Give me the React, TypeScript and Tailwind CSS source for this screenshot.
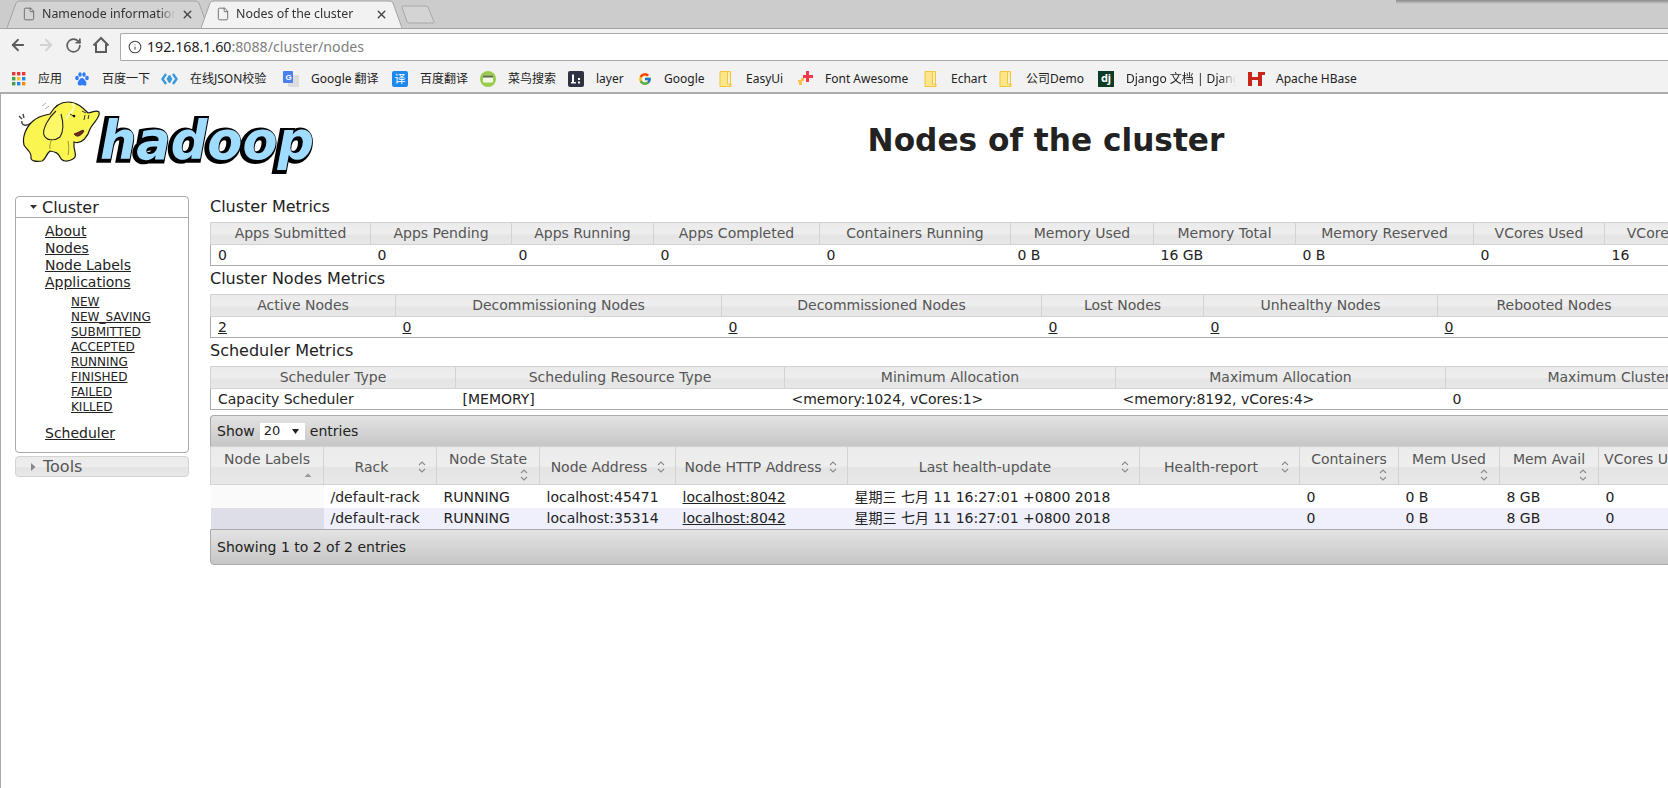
import React from 'react'
import { ArrowLeft, ArrowRight, RotateCw, Info, File, X } from 'lucide-react'
import { FcGoogle } from 'react-icons/fc'

interface Col {
  label: string
  width: string
}

const clusterCols: Col[] = [
  { label: 'Apps Submitted', width: 'w-[160px]' },
  { label: 'Apps Pending', width: 'w-[141px]' },
  { label: 'Apps Running', width: 'w-[142px]' },
  { label: 'Apps Completed', width: 'w-[166px]' },
  { label: 'Containers Running', width: 'w-[191px]' },
  { label: 'Memory Used', width: 'w-[143px]' },
  { label: 'Memory Total', width: 'w-[142px]' },
  { label: 'Memory Reserved', width: 'w-[178px]' },
  { label: 'VCores Used', width: 'w-[131px]' },
  { label: 'VCores Total', width: 'w-[131px]' },
]
const clusterValues = ['0', '0', '0', '0', '0', '0 B', '16 GB', '0 B', '0', '16']

const nodeCols: Col[] = [
  { label: 'Active Nodes', width: 'w-[185px]' },
  { label: 'Decommissioning Nodes', width: 'w-[326px]' },
  { label: 'Decommissioned Nodes', width: 'w-[320px]' },
  { label: 'Lost Nodes', width: 'w-[162px]' },
  { label: 'Unhealthy Nodes', width: 'w-[234px]' },
  { label: 'Rebooted Nodes', width: 'w-[233px]' },
]

const schedulerCols: Col[] = [
  { label: 'Scheduler Type', width: 'w-[245px]' },
  { label: 'Scheduling Resource Type', width: 'w-[329px]' },
  { label: 'Minimum Allocation', width: 'w-[331px]' },
  { label: 'Maximum Allocation', width: 'w-[330px]' },
  { label: 'Maximum Cluster Application Priority', width: 'w-[464px]' },
]
const schedulerValues = ['Capacity Scheduler', '[MEMORY]', '<memory:1024, vCores:1>', '<memory:8192, vCores:4>', '0']

interface NodeCol extends Col {
  stacked?: boolean
  up?: boolean
}

const listCols: NodeCol[] = [
  { label: 'Node Labels', width: 'w-[113px]', stacked: true, up: true },
  { label: 'Rack', width: 'w-[113px]' },
  { label: 'Node State', width: 'w-[103px]', stacked: true },
  { label: 'Node Address', width: 'w-[136px]' },
  { label: 'Node HTTP Address', width: 'w-[172px]' },
  { label: 'Last health-update', width: 'w-[292px]' },
  { label: 'Health-report', width: 'w-[160px]' },
  { label: 'Containers', width: 'w-[99px]', stacked: true },
  { label: 'Mem Used', width: 'w-[101px]', stacked: true },
  { label: 'Mem Avail', width: 'w-[99px]', stacked: true },
  { label: 'VCores Used', width: 'w-[100px]', stacked: true },
]

const listRows = [
  ['', '/default-rack', 'RUNNING', 'localhost:45471', 'localhost:8042', '星期三 七月 11 16:27:01 +0800 2018', '', '0', '0 B', '8 GB', '0'],
  ['', '/default-rack', 'RUNNING', 'localhost:35314', 'localhost:8042', '星期三 七月 11 16:27:01 +0800 2018', '', '0', '0 B', '8 GB', '0'],
]

const subLinks = ['NEW', 'NEW_SAVING', 'SUBMITTED', 'ACCEPTED', 'RUNNING', 'FINISHED', 'FAILED', 'KILLED']

const thClass =
  'border border-[#d3d3d3] bg-[linear-gradient(#ebebeb_0%,#eeeeee_50%,#e4e4e4_55%,#e8e8e8_100%)] font-normal text-[#555555] text-center p-0 h-[21px] overflow-hidden whitespace-nowrap'

const SortIcon = ({ up }: { up?: boolean }) => (
  <svg width="10" height="14" viewBox="0 0 10 14" className="shrink-0">
    {up ? (
      <path d="M1.5 9 L5 5.5 L8.5 9 Z" fill="#999999" />
    ) : (
      <path d="M2 5 L5 2 L8 5 M2 9 L5 12 L8 9" fill="none" stroke="#8a8a8a" strokeWidth="1.1" />
    )}
  </svg>
)

const MetricTable = ({ title, cols, values, width, linked }: { title: string; cols: Col[]; values: string[]; width: string; linked?: boolean }) => (
  <div>
    <h3 className="h-[28px] pt-[3px] text-[16px] leading-[20px] text-[#222222]">{title}</h3>
    <table className={`table-fixed border-collapse border-b border-l border-[#aaaaaa] text-[14px] ${width}`}>
      <thead>
        <tr>
          {cols.map(c => (
            <th key={c.label} className={`${thClass} ${c.width}`}>{c.label}</th>
          ))}
        </tr>
      </thead>
      <tbody>
        <tr>
          {values.map((v, i) => (
            <td key={i} className="h-[21px] p-0 pl-[7px] leading-[20px] text-[#222222] whitespace-nowrap">
              {linked ? <a className="underline">{v}</a> : v}
            </td>
          ))}
        </tr>
      </tbody>
    </table>
  </div>
)

const Tab = ({ title, active }: { title: string; active?: boolean }) => (
  <div className={`relative w-[201px] h-[28px] shrink-0 -mr-[7px] ${active ? 'z-10' : ''}`}>
    <svg width="201" height="28" viewBox="0 0 201 28" className="absolute left-0 top-0">
      <path
        d="M0 28 L9 3 Q10 1 13 1 L188 1 Q191 1 192 3 L201 28"
        fill={active ? '#f2f2f2' : '#d3d3d3'}
        stroke="#a3a3a3"
      />
    </svg>
    <div className="relative flex items-center h-full pl-[15px] pr-[14px] gap-[6px]">
      <File size={14} strokeWidth={1.4} className="text-[#5a5a5a] shrink-0" />
      <span className="flex-1 overflow-hidden whitespace-nowrap text-[12.4px] text-[#333333] [mask-image:linear-gradient(to_right,black_88%,transparent)]">
        {title}
      </span>
      <X size={13} strokeWidth={2.6} className="text-[#444444] shrink-0" />
    </div>
  </div>
)

const Folder = () => (
  <svg width="13" height="16" viewBox="0 0 13 16">
    <path d="M1 .5H8.5V13H12V15.5H1Z" fill="#fde68a" stroke="#f0c63c" />
    <path d="M8.5 .5H11.5V15.5" fill="#fdeaa5" stroke="#f0c63c" />
  </svg>
)

const bookmarks: { icon: React.ReactNode; label: string; text: string }[] = [
  {
    icon: (
      <svg width="14" height="14" viewBox="0 0 14 14">
        <rect x="0" y="0" width="3.4" height="3.4" fill="#e53935" />
        <rect x="5" y="0" width="3.4" height="3.4" fill="#e53935" />
        <rect x="10" y="0" width="3.4" height="3.4" fill="#e53935" />
        <rect x="0" y="5" width="3.4" height="3.4" fill="#43a047" />
        <rect x="5" y="5" width="3.4" height="3.4" fill="#fbc02d" />
        <rect x="10" y="5" width="3.4" height="3.4" fill="#1e88e5" />
        <rect x="0" y="10" width="3.4" height="3.4" fill="#43a047" />
        <rect x="5" y="10" width="3.4" height="3.4" fill="#1e88e5" />
        <rect x="10" y="10" width="3.4" height="3.4" fill="#fb8c00" />
      </svg>
    ),
    label: '应用',
    text: 'ml-[12px] mr-[12px] w-[24px]',
  },
  {
    icon: (
      <svg width="16" height="16" viewBox="0 0 16 16">
        <g fill="#2f7cf6">
          <ellipse cx="3" cy="7" rx="1.8" ry="2.2" />
          <ellipse cx="6" cy="3.5" rx="1.7" ry="2.2" />
          <ellipse cx="10" cy="3.5" rx="1.7" ry="2.2" />
          <ellipse cx="13" cy="7" rx="1.8" ry="2.2" />
          <path d="M8 7C6 7 5.5 9 4.5 10S3 14.5 6 14.5 7 14 8 14 10 15 11.500 14.500 12.500 11 11.500 10 10 7 8 7Z" />
        </g>
      </svg>
    ),
    label: '百度一下',
    text: 'ml-[12px] mr-[11px] w-[48px]',
  },
  {
    icon: (
      <svg width="17" height="12" viewBox="0 0 17 12" fill="none" stroke="#3a9ad9" strokeWidth="2.4">
        <path d="M5 1 L1.500 6 L5 11" />
        <path d="M12 1 L15.500 6 L12 11" />
        <path d="M8.500 2 L11 6 L8.500 10 L6 6Z" strokeWidth="1" fill="#3a9ad9" />
      </svg>
    ),
    label: '在线JSON校验',
    text: 'ml-[12px] mr-[13px] w-[80px]',
  },
  {
    icon: (
      <svg width="16" height="16" viewBox="0 0 16 16">
        <rect x="5" y="4" width="11" height="12" fill="#dcdcdc" />
        <rect x="0" y="0" width="10" height="12" rx="1" fill="#4a80ec" />
        <text x="2.400" y="9" fontSize="8" fontWeight="700" fill="#ffffff" fontFamily="Liberation Sans, sans-serif">G</text>
      </svg>
    ),
    label: 'Google 翻译',
    text: 'ml-[12px] mr-[11px] w-[70px]',
  },
  {
    icon: (
      <div className="w-[16px] h-[16px] rounded-[2px] bg-[#1e88f0] text-white text-[11px] leading-[16px] text-center">译</div>
    ),
    label: '百度翻译',
    text: 'ml-[12px] mr-[12px] w-[48px]',
  },
  {
    icon: (
      <svg width="16" height="16" viewBox="0 0 16 16">
        <circle cx="8" cy="8" r="8" fill="#9bcb4e" />
        <rect x="3" y="4.500" width="10" height="7" rx="1" fill="#f3f7e6" />
        <rect x="3" y="4.500" width="10" height="2" fill="#5f6b4a" />
      </svg>
    ),
    label: '菜鸟搜索',
    text: 'ml-[12px] mr-[12px] w-[48px]',
  },
  {
    icon: (
      <svg width="16" height="16" viewBox="0 0 16 16">
        <rect width="16" height="16" rx="2" fill="#2f3242" />
        <path d="M4 3.500H6V11H8V12.500H3V11H4ZM10 7H12V9H10ZM10 10.500H12V12.500H10Z" fill="#ffffff" />
      </svg>
    ),
    label: 'layer',
    text: 'ml-[12px] mr-[13px] w-[29px]',
  },
  { icon: <FcGoogle size={14} />, label: 'Google', text: 'ml-[12px] mr-[13px] w-[42px]' },
  { icon: <Folder />, label: 'EasyUi', text: 'ml-[14px] mr-[13px] w-[38px]' },
  {
    icon: (
      <svg width="16" height="15" viewBox="0 0 16 15">
        <path d="M1 9H4V7H7V10H5V14H2V11H1Z" fill="#fcc14a" />
        <path d="M9 0H12V4H16V7H12V11H9V7H6V4H9Z" fill="#f0384f" />
      </svg>
    ),
    label: 'Font Awesome',
    text: 'ml-[12px] mr-[13px] w-[86px]',
  },
  { icon: <Folder />, label: 'Echart', text: 'ml-[14px] mr-[12px] w-[36px]' },
  { icon: <Folder />, label: '公司Demo', text: 'ml-[14px] mr-[12px] w-[60px]' },
  {
    icon: (
      <div className="w-[16px] h-[16px] bg-[#0c3c26] text-white text-[11px] leading-[14px] text-center font-bold">dj</div>
    ),
    label: 'Django 文档 | Django',
    text: 'ml-[12px] mr-[12px] w-[110px] overflow-hidden [mask-image:linear-gradient(to_right,black_85%,transparent)]',
  },
  {
    icon: (
      <svg width="17" height="15" viewBox="0 0 17 15">
        <path d="M0 1H4V6H10V1H17V4H14V15H10V9H4V15H0Z" fill="#c9261a" />
      </svg>
    ),
    label: 'Apache HBase',
    text: 'ml-[11px] w-[84px]',
  },
]

const HadoopLogo = () => (
  <svg width="306" height="80" viewBox="15 95 306 80" className="shrink-0 ml-[14px]">
    {/* tail */}
    <path d="M31 124 C26 128 21 126 22 122 M22 120 L19 117 M24 119 L23 115" fill="none" stroke="#444444" strokeWidth="1.4" />
    {/* body */}
    <path
      d="M68 103 C78 103 84 110 88 114 C92 114 96 110 99 113 C101 118 93 124 90 130 C88 137 82 146 74 143 L74 148 C75 154 77 158 73 160 C68 163 62 163 60 158 C58 154 56 153 50 152 C46 155 46 160 42 162 C36 163 30 162 31 158 C32 153 26 150 24 146 C22 138 26 128 33 122 C38 117 46 116 50 115 C54 108 60 103 68 103 Z"
      fill="#fbf552"
      stroke="#1a1a1a"
      strokeWidth="1.2"
    />
    {/* ear */}
    <path d="M56 112 C49 118 42 130 44 136 C46 142 55 142 60 138 C64 132 63 122 61 115" fill="#fdf86a" stroke="#222222" strokeWidth="1.1" />
    <path d="M66 120 C70 114 78 108 72 105" fill="none" stroke="#ffffc0" strokeWidth="2" />
    {/* face */}
    <path d="M70 115 L75 118 M85 116 L84 121 M89 116 L88 120 M82 112 L86 114" stroke="#333333" strokeWidth="1" fill="none" />
    <circle cx="74" cy="117" r="1.300" fill="#111111" />
    <path d="M74 135 C77 139 81 137 84 132 C83 130 80 133 74 135 Z" fill="#7a2a1a" stroke="#222222" strokeWidth=".8" />
    <path d="M50 150 C49 144 52 140 54 140 M68 142 C69 148 69 152 68 156" stroke="#999933" strokeWidth="1" fill="none" />
    <path d="M42 107 L46 104 M45 110 L49 107" stroke="#999999" strokeWidth=".8" />
    {/* wordmark */}
    <text
      x="98"
      y="161"
      textLength="214"
      lengthAdjust="spacingAndGlyphs"
      fontFamily="DejaVu Sans, sans-serif"
      fontWeight="700"
      fontStyle="italic"
      fontSize="54"
      fill="#000000"
      stroke="#000000"
      strokeWidth="6"
      strokeLinejoin="miter"
    >
      hadoop
    </text>
    <text
      x="100"
      y="160"
      textLength="214"
      lengthAdjust="spacingAndGlyphs"
      fontFamily="DejaVu Sans, sans-serif"
      fontWeight="700"
      fontStyle="italic"
      fontSize="54"
      fill="#9fdcff"
    >
      hadoop
    </text>
  </svg>
)

const App: React.FC = () => {
  return (
    <div className="relative w-[1668px] h-[788px] overflow-hidden flex flex-col bg-white font-['DejaVu_Sans','Noto_Sans_CJK_SC',sans-serif]">
      <div className="absolute right-0 top-0 w-[272px] h-[4px] bg-[linear-gradient(#8a8a8a,#cccccc)]" />

      {/* browser tabs */}
      <div className="flex h-[28px] pl-[7px] bg-[#cccccc] shrink-0 font-['Noto_Sans','Noto_Sans_CJK_SC',sans-serif]">
        <Tab title="Namenode information" />
        <Tab title="Nodes of the cluster" active />
        <svg width="36" height="28" viewBox="0 0 36 28" className="shrink-0 ml-[6px] -mt-[1px]">
          <path d="M1 8 Q1 7 2 7 L25 7 Q26 7 27 8 L33 23 Q33 24 32 24 L8 24 Q7 24 6 23 Z" fill="#d4d4d4" stroke="#a8a8a8" />
        </svg>
      </div>

      {/* address bar */}
      <div className="flex items-end h-[33px] bg-[#f2f2f2] border-t border-[#a3a3a3] shrink-0 font-['Noto_Sans','Noto_Sans_CJK_SC',sans-serif]">
        <div className="flex items-center self-center w-[120px] pl-[9px] gap-[10px]">
          <ArrowLeft size={18} strokeWidth={2.4} className="text-[#5c5c5c]" />
          <ArrowRight size={18} strokeWidth={2.4} className="text-[#d2d2d2]" />
          <RotateCw size={17} strokeWidth={2.4} className="text-[#5c5c5c]" />
          <svg width="18" height="18" viewBox="0 0 18 18" fill="none" stroke="#5c5c5c" strokeWidth="2">
            <path d="M1.500 9.500 L9 2 L16.500 9.500 M4 8 V16 H14 V8" />
          </svg>
        </div>
        <div className="flex-1 flex items-center h-[28px] bg-white border border-r-0 border-[#a9a9a9] rounded-l-[2px] pl-[7px] gap-[5px]">
          <Info size={14} strokeWidth={1.8} className="text-[#444444]" />
          <span className="text-[14.2px] text-[#222222] whitespace-nowrap">
            192.168.1.60<span className="text-[#808080]">:8088/cluster/nodes</span>
          </span>
        </div>
      </div>

      {/* bookmarks */}
      <div className="flex items-center h-[33px] pt-[4px] pl-[12px] bg-[#f2f2f2] border-b-[2px] border-[#ababab] shrink-0 text-[12px] text-[#222222] font-['Noto_Sans','Noto_Sans_CJK_SC',sans-serif]">
        {bookmarks.map(b => (
          <React.Fragment key={b.label}>
            {b.icon}
            <span className={`whitespace-nowrap ${b.text}`}>{b.label}</span>
          </React.Fragment>
        ))}
      </div>

      {/* page */}
      <div className="flex-1 border-l border-[#aaaaaa]">
        <div className="flex h-[100px]">
          <HadoopLogo />
          <div className="w-[1450px] shrink-0 text-center pt-[26px] text-[31.2px] leading-[40px] font-bold text-[#222222] whitespace-nowrap">
            Nodes of the cluster
          </div>
        </div>

        <div className="flex">
          {/* sidebar */}
          <div className="w-[174px] mt-[2px] ml-[14px] mr-[21px] shrink-0">
            <div className="h-[257px] border border-[#aaaaaa] rounded-[4px] text-[#222222]">
              <div className="flex items-center h-[21px] pt-[1px] border-b border-[#aaaaaa] pl-[14px] gap-[5px] text-[16px] text-[#222222]">
                <svg width="7" height="5" viewBox="0 0 7 5"><path d="M0 0H7L3.500 4Z" fill="#333333" /></svg>
                Cluster
              </div>
              <div className="pl-[29px] pt-[5px] text-[14px] leading-[17px]">
                <a className="block underline">About</a>
                <a className="block underline">Nodes</a>
                <a className="block underline">Node Labels</a>
                <a className="block underline">Applications</a>
                <div className="pl-[26px] pt-[4px] pb-[10px] text-[12px] leading-[15px]">
                  {subLinks.map(s => (
                    <a key={s} className="block underline">{s}</a>
                  ))}
                </div>
                <a className="block underline">Scheduler</a>
              </div>
            </div>
            <div className="flex items-center h-[21px] pt-[1px] mt-[3px] border border-[#d3d3d3] rounded-[4px] bg-[linear-gradient(#ebebeb_0%,#eeeeee_50%,#e4e4e4_55%,#e8e8e8_100%)] pl-[15px] gap-[7px] text-[16px] text-[#555555]">
              <svg width="5" height="8" viewBox="0 0 5 8"><path d="M0 0L4.500 4L0 8Z" fill="#888888" /></svg>
              Tools
            </div>
          </div>

          {/* main */}
          <div className="w-[1800px] shrink-0">
            <MetricTable title="Cluster Metrics" cols={clusterCols} values={clusterValues} width="w-[1525px]" />
            <MetricTable title="Cluster Nodes Metrics" cols={nodeCols} values={['2', '0', '0', '0', '0', '0']} width="w-[1460px]" linked />
            <MetricTable title="Scheduler Metrics" cols={schedulerCols} values={schedulerValues} width="w-[1699px]" />

            <div className="mt-[5px] text-[14px]">
              <div className="flex items-center h-[31px] pl-[6px] gap-[5px] border border-b-0 border-[#aaaaaa] rounded-t-[4px] bg-[linear-gradient(#e3e3e3,#c6c6c6)] text-[#222222]">
                Show
                <span className="flex items-center justify-between w-[45px] h-[17px] pl-[4px] pr-[6px] bg-white text-[13px]">
                  20
                  <svg width="7" height="5" viewBox="0 0 7 5"><path d="M0 0H7L3.500 5Z" fill="#222222" /></svg>
                </span>
                entries
              </div>
              <table className="table-fixed border-collapse border-t border-[#aaaaaa] w-[1488px]">
                <thead>
                  <tr>
                    {listCols.map(c => (
                      <th key={c.label} className={`${thClass} ${c.width} !h-[38px]`}>
                        {c.stacked ? (
                          <div className="flex flex-col items-stretch pt-[1px]">
                            <span className="leading-[17px]">{c.label}</span>
                            <span className="flex justify-end pr-[10px] h-[14px]"><SortIcon up={c.up} /></span>
                          </div>
                        ) : (
                          <div className="flex items-center pl-[2px] pr-[9px] pt-[3px]">
                            <span className="flex-1 text-center">{c.label}</span>
                            <SortIcon />
                          </div>
                        )}
                      </th>
                    ))}
                  </tr>
                </thead>
                <tbody className="text-[#222222]">
                  {listRows.map((row, r) => (
                    <tr key={r} className={r === 0 ? 'bg-white' : 'bg-[#f0f0fc]'}>
                      {row.map((cell, i) => (
                        <td
                          key={i}
                          className={`p-0 pl-[7px] whitespace-nowrap ${r === 0 ? 'h-[22px] pt-[2px]' : 'h-[21px]'} ${
                            i === 0 ? (r === 0 ? 'bg-[#fafafa]' : 'bg-[#dedee8]') : ''
                          }`}
                        >
                          {i === 4 ? <a className="underline">{cell}</a> : cell}
                        </td>
                      ))}
                    </tr>
                  ))}
                </tbody>
              </table>
              <div className="flex items-center h-[36px] pl-[6px] border border-[#aaaaaa] rounded-b-[4px] bg-[linear-gradient(#e3e3e3,#c6c6c6)] text-[#222222]">
                Showing 1 to 2 of 2 entries
              </div>
            </div>
          </div>
        </div>
      </div>
    </div>
  )
}

export default App
